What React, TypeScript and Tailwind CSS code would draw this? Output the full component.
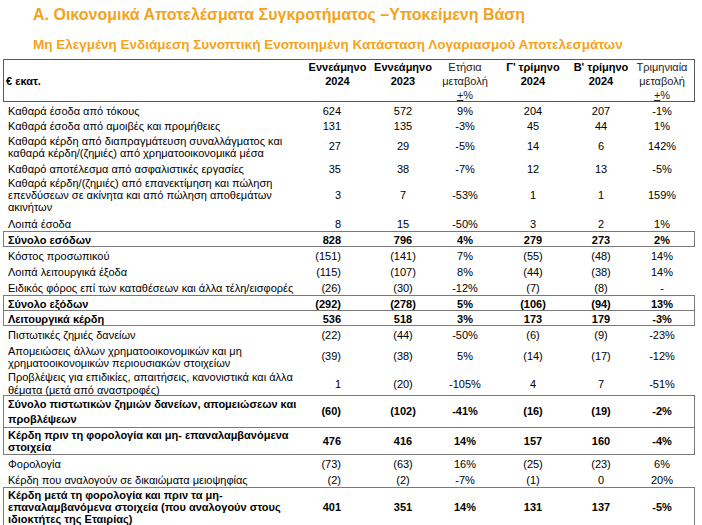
import type { ReactNode } from "react";

type Row = {
  lines: string[];
  v: string[];
  total?: boolean;
  h: string;
  lead?: string;
  overlap?: boolean;
};

// grid widths tuned to the scan — label, 9m 24, 9m 23, yoy, Q3, Q2, qoq
const COLS = "grid grid-cols-[301px_65px_66px_58px_78px_58px_64px]";

const ROWS: Row[] = [
  { lines: ["Καθαρά έσοδα από τόκους"], v: ["624", "572", "9%", "204", "207", "-1%"], h: "h-[15px]" },
  { lines: ["Καθαρά έσοδα από αμοιβές και προμήθειες"], v: ["131", "135", "-3%", "45", "44", "1%"], h: "h-[16px]" },
  {
    lines: ["Καθαρά κέρδη από διαπραγμάτευση συναλλάγματος και", "καθαρά κέρδη/(ζημιές) από χρηματοοικονομικά μέσα"],
    v: ["27", "29", "-5%", "14", "6", "142%"],
    h: "h-[27px]",
  },
  { lines: ["Καθαρό αποτέλεσμα από ασφαλιστικές εργασίες"], v: ["35", "38", "-7%", "12", "13", "-5%"], h: "h-[15px]" },
  {
    lines: [
      "Καθαρά κέρδη/(ζημιές) από επανεκτίμηση και πώληση",
      "επενδύσεων σε ακίνητα και από πώληση αποθεμάτων",
      "ακινήτων",
    ],
    v: ["3", "7", "-53%", "1", "1", "159%"],
    h: "h-[40px]",
  },
  { lines: ["Λοιπά έσοδα"], v: ["8", "15", "-50%", "3", "2", "1%"], h: "h-[16px]" },
  { lines: ["Σύνολο εσόδων"], v: ["828", "796", "4%", "279", "273", "2%"], total: true, h: "h-[16px]" },
  { lines: ["Κόστος προσωπικού"], v: ["(151)", "(141)", "7%", "(55)", "(48)", "14%"], h: "h-[16px]" },
  { lines: ["Λοιπά λειτουργικά έξοδα"], v: ["(115)", "(107)", "8%", "(44)", "(38)", "14%"], h: "h-[16px]" },
  {
    lines: ["Ειδικός φόρος επί των καταθέσεων και άλλα τέλη/εισφορές"],
    v: ["(26)", "(30)", "-12%", "(7)", "(8)", "-"],
    h: "h-[16px]",
  },
  { lines: ["Σύνολο εξόδων"], v: ["(292)", "(278)", "5%", "(106)", "(94)", "13%"], total: true, h: "h-[16px]" },
  { lines: ["Λειτουργικά κέρδη"], v: ["536", "518", "3%", "173", "179", "-3%"], total: true, h: "h-[16px]", overlap: true },
  { lines: ["Πιστωτικές ζημιές δανείων"], v: ["(22)", "(44)", "-50%", "(6)", "(9)", "-23%"], h: "h-[17px]" },
  {
    lines: ["Απομειώσεις άλλων χρηματοοικονομικών και μη", "χρηματοοικονομικών περιουσιακών στοιχείων"],
    v: ["(39)", "(38)", "5%", "(14)", "(17)", "-12%"],
    h: "h-[27px]",
  },
  {
    lines: ["Προβλέψεις για επιδικίες, απαιτήσεις, κανονιστικά και άλλα", "θέματα (μετά από αναστροφές)"],
    v: ["1", "(20)", "-105%", "4", "7", "-51%"],
    h: "h-[25px]",
    lead: "leading-[13px]",
  },
  {
    lines: ["Σύνολο πιστωτικών ζημιών δανείων, απομειώσεων και", "προβλέψεων"],
    v: ["(60)", "(102)", "-41%", "(16)", "(19)", "-2%"],
    total: true,
    h: "h-[33px]",
    lead: "leading-[15px]",
  },
  {
    lines: ["Κέρδη πριν τη φορολογία και μη- επαναλαμβανόμενα", "στοιχεία"],
    v: ["476", "416", "14%", "157", "160", "-4%"],
    total: true,
    h: "h-[28px]",
    overlap: true,
  },
  { lines: ["Φορολογία"], v: ["(73)", "(63)", "16%", "(25)", "(23)", "6%"], h: "h-[16px]" },
  {
    lines: ["Κέρδη που αναλογούν σε δικαιώματα μειοψηφίας"],
    v: ["(2)", "(2)", "-7%", "(1)", "0", "20%"],
    h: "h-[16px]",
  },
  {
    lines: [
      "Κέρδη μετά τη φορολογία και πριν τα μη-",
      "επαναλαμβανόμενα στοιχεία (που αναλογούν στους",
      "ιδιοκτήτες της Εταιρίας)",
    ],
    v: ["401", "351", "14%", "131", "137", "-5%"],
    total: true,
    h: "h-[40px]",
  },
];

function HeadCell({ children, bold }: { children: ReactNode; bold?: boolean }) {
  return (
    <div className={`flex flex-col items-center text-center leading-[14px] ${bold ? "font-bold" : "text-[#222]"}`}>
      {children}
    </div>
  );
}

function TableRow({ row }: { row: Row }) {
  const edge = row.total ? "border-[#7a7a7a] font-bold" : "border-transparent";
  return (
    <div className={`${COLS} ${row.h} ${edge} ${row.overlap ? "-mt-px" : ""} border items-center`}>
      <div className={`pl-[4px] ${row.lead ?? "leading-[12px]"}`}>
        {row.lines.map((l) => (
          <div key={l} className="whitespace-nowrap">
            {l}
          </div>
        ))}
      </div>
      <div className="pr-[29px] text-right">{row.v[0]}</div>
      {row.v.slice(1).map((x, i) => (
        <div key={i} className="text-center">
          {x}
        </div>
      ))}
    </div>
  );
}

export default function App() {
  return (
    <div className="h-[525px] w-[702px] overflow-hidden bg-white font-['Liberation_Sans',Arial,sans-serif] text-[11px] text-black">
      <h1 className="pl-[33px] pt-[5px] text-[16px] font-bold leading-[19px] text-[#f5a31c]">
        Α. Οικονομικά Αποτελέσματα Συγκροτήματος –Υποκείμενη Βάση
      </h1>
      <h2 className="mt-[12px] pl-[33px] text-[13.5px] font-bold leading-[17px] text-[#f5a31c]">
        Μη Ελεγμένη Ενδιάμεση Συνοπτική Ενοποιημένη Κατάσταση Λογαριασμού Αποτελεσμάτων
      </h2>

      <div className="ml-[3px] mt-[6px] w-[692px]">
        {/* column headers */}
        <div className={`${COLS} h-[43px] border border-[#5a5a5a]`}>
          <div className="self-center pl-[2px] pt-[1px] font-bold">€ εκατ.</div>
          <HeadCell bold>
            <span>Εννεάμηνο</span>
            <span>2024</span>
          </HeadCell>
          <HeadCell bold>
            <span>Εννεάμηνο</span>
            <span>2023</span>
          </HeadCell>
          <HeadCell>
            <span>Ετήσια</span>
            <span>μεταβολή</span>
            <span>
              <span className="underline">+</span>%
            </span>
          </HeadCell>
          <HeadCell bold>
            <span>Γ' τρίμηνο</span>
            <span>2024</span>
          </HeadCell>
          <HeadCell bold>
            <span>Β' τρίμηνο</span>
            <span>2024</span>
          </HeadCell>
          <HeadCell>
            <span>Τριμηνιαία</span>
            <span>μεταβολή</span>
            <span>
              <span className="underline">+</span>%
            </span>
          </HeadCell>
        </div>

        {ROWS.map((r) => (
          <TableRow key={r.lines[0]} row={r} />
        ))}
      </div>
    </div>
  );
}
